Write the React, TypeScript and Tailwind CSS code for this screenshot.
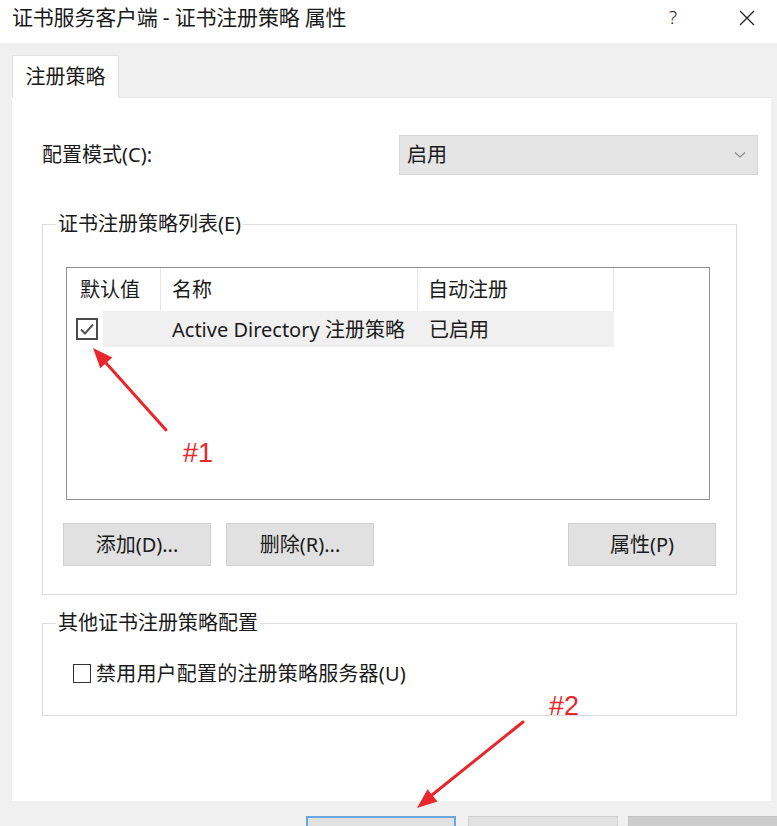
import React from "react";

const FONT = { fontFamily: '"Noto Sans", "Noto Sans CJK SC", sans-serif' };

function WinButton({ label, className = "" }: { label: string; className?: string }) {
  return (
    <div
      className={`w-[148px] h-[43px] bg-[#e1e1e1] border border-[#d0d0d0] flex items-center justify-center text-[20px] text-[#1a1a1a] ${className}`}
    >
      {label}
    </div>
  );
}

function CheckedBox() {
  return (
    <svg width="22" height="22" viewBox="0 0 22 22">
      <rect x="1" y="1" width="20" height="20" fill="#fff" stroke="#4a4a4a" strokeWidth="2" />
      <path d="M5 11.5 L9 15.5 L17 6.5" fill="none" stroke="#555" strokeWidth="2" />
    </svg>
  );
}

export default function App() {
  return (
    <div className="relative w-[777px] h-[826px] overflow-hidden bg-[#f0f0f0] text-[#1a1a1a]" style={FONT}>
      {/* Title bar */}
      <div className="h-[43px] bg-white flex items-center pl-[12px] pb-[8px]">
        <span className="text-[21px] leading-none tracking-[-0.2px]">证书服务客户端 - 证书注册策略 属性</span>
        <span className="ml-auto mr-[62px] text-[19px] font-light leading-none text-[#222]">?</span>
        <svg width="16" height="16" viewBox="0 0 16 16" className="mr-[22px]">
          <path d="M1 1 L15 15 M15 1 L1 15" stroke="#222" strokeWidth="1.3" />
        </svg>
      </div>

      {/* Tab strip */}
      <div className="pt-[12px] pl-[12px] flex">
        <div className="w-[107px] h-[43px] bg-white border border-b-0 border-[#e2e2e2] flex items-center justify-center text-[20px] relative z-10 -mb-px">
          注册策略
        </div>
      </div>

      {/* Panel */}
      <div className="ml-[12px] w-[759px] h-[704px] bg-white border-t border-[#e6e6e6] flex flex-col">
        {/* Config row */}
        <div className="mt-[37px] pl-[30px] pr-[13px] flex items-center justify-between">
          <span className="text-[20px]">配置模式(C):</span>
          <div className="w-[359px] h-[40px] bg-[#e5e5e5] border border-[#d6d6d6] flex items-center pl-[7px] pr-[11px]">
            <span className="text-[20px]">启用</span>
            <svg width="12" height="8" viewBox="0 0 12 8" className="ml-auto">
              <path d="M1 1.5 L6 6 L11 1.5" fill="none" stroke="#8a8a8a" strokeWidth="1.3" />
            </svg>
          </div>
        </div>

        {/* Group 1 */}
        <div className="relative mt-[49px] ml-[30px] w-[695px] h-[371px] border border-[#dcdcdc] flex flex-col">
          <span className="absolute left-[13px] -top-[15px] bg-white px-[2px] text-[20px] leading-[28px]">证书注册策略列表(E)</span>
          {/* List box */}
          <div className="mt-[42px] ml-[23px] w-[644px] h-[233px] border border-[#8e8f94] bg-white flex flex-col">
            <div className="h-[43px] flex text-[20px]">
              <div className="w-[94px] flex items-center pl-[13px] border-r border-[#e5e5e5]">默认值</div>
              <div className="w-[257px] flex items-center pl-[11px] border-r border-[#e5e5e5]">名称</div>
              <div className="w-[196px] flex items-center pl-[10px] border-r border-[#e5e5e5]">自动注册</div>
            </div>
            <div className="h-[36px] flex items-stretch text-[20px]">
              <div className="w-[36px] flex items-center">
                <div className="ml-[9px]">
                  <CheckedBox />
                </div>
              </div>
              <div className="w-[511px] bg-[#f0f0f0] flex items-center pt-[2px]">
                <span className="ml-[69px] w-[257px]">Active Directory 注册策略</span>
                <span>已启用</span>
              </div>
            </div>
          </div>
          {/* Buttons */}
          <div className="mt-[23px] ml-[20px] mr-[20px] flex">
            <WinButton label="添加(D)..." />
            <WinButton label="删除(R)..." className="ml-[15px]" />
            <WinButton label="属性(P)" className="ml-auto" />
          </div>
        </div>

        {/* Group 2 */}
        <div className="relative mt-[28px] ml-[30px] w-[695px] h-[93px] border border-[#dcdcdc] flex items-center">
          <span className="absolute left-[13px] -top-[15px] bg-white px-[2px] text-[20px] leading-[28px]">其他证书注册策略配置</span>
          <div className="mt-[8px] ml-[30px] flex items-center">
            <div className="w-[18px] h-[19px] border border-[#333] bg-white" />
            <span className="ml-[5px] text-[20px] tracking-[0.2px]">禁用用户配置的注册策略服务器(U)</span>
          </div>
        </div>
      </div>

      {/* Bottom buttons (cut off) */}
      <div className="mt-[15px] flex pl-[306px]">
        <div className="shrink-0 w-[150px] h-[30px] bg-[#e1e1e1] border-2 border-[#6aa6e0]" />
        <div className="shrink-0 ml-[12px] w-[150px] h-[30px] bg-[#e1e1e1] border border-[#d0d0d0]" />
        <div className="shrink-0 ml-[10px] w-[160px] h-[30px] bg-[#cccccc] border border-[#c4c4c4]" />
      </div>

      {/* Annotations */}
      <svg className="absolute inset-0 pointer-events-none" width="777" height="826" viewBox="0 0 777 826">
        <line x1="166" y1="430" x2="106" y2="363" stroke="#e8262b" strokeWidth="3" strokeLinecap="round" />
        <polygon points="93,348 112.3,357.6 100.3,368.2" fill="#e8262b" />
        <line x1="523" y1="722" x2="432" y2="795" stroke="#e8262b" strokeWidth="3" strokeLinecap="round" />
        <polygon points="417,808 437.5,801.6 427.5,789.2" fill="#e8262b" />
      </svg>
      <span
        className="absolute left-[183px] top-[440px] text-[27px] leading-none text-[#e8262b]"
        style={{ fontFamily: '"Liberation Sans", sans-serif' }}
      >
        #1
      </span>
      <span
        className="absolute left-[549px] top-[693px] text-[27px] leading-none text-[#e8262b]"
        style={{ fontFamily: '"Liberation Sans", sans-serif' }}
      >
        #2
      </span>
    </div>
  );
}
